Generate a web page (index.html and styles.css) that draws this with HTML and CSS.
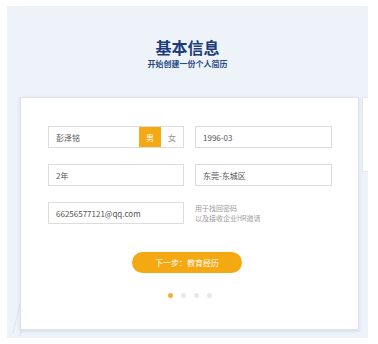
FILE: index.html
```html
<!DOCTYPE html>
<html lang="zh-CN">
<head>
<meta charset="utf-8">
<title>基本信息</title>
<link rel="stylesheet" href="styles.css">
</head>
<body>
<div class="page">
  <div class="panel">
    <svg class="deco" width="30" height="60" viewBox="0 0 30 60"><path d="M11 58 L15 18 M4 55 L12 22" stroke="#dfe4ec" stroke-width="1" fill="none"/></svg>
    <header class="head">
      <h1 class="title">基本信息</h1>
      <p class="subtitle">开始创建一份个人简历</p>
    </header>
    <div class="cards">
      <section class="card">
        <div class="grid">
          <div class="field field-name">
            <span class="val">彭泽铭</span>
            <span class="sex sex-on">男</span>
            <span class="sex">女</span>
          </div>
          <div class="field"><span class="val">1996-03</span></div>
          <div class="field"><span class="val">2年</span></div>
          <div class="field"><span class="val">东莞-东城区</span></div>
          <div class="field"><span class="val">66256577121@qq.com</span></div>
          <div class="hint">用于找回密码<br>以及接收企业HR邀请</div>
        </div>
        <button class="next">下一步：教育经历</button>
        <div class="dots">
          <span class="dot dot-on"></span>
          <span class="dot"></span>
          <span class="dot"></span>
          <span class="dot"></span>
        </div>
      </section>
      <div class="card-next"></div>
    </div>
  </div>
</div>
</body>
</html>
```
FILE: styles.css
```css
* { box-sizing: border-box; }
html, body { margin: 0; padding: 0; background: #ffffff; }
body {
  font-family: "Noto Sans CJK SC", "Noto Sans", sans-serif;
  width: 378px;
  height: 344px;
  overflow: hidden;
}
.page {
  padding: 6px 10px 6px 7px;
}
.panel {
  position: relative;
  height: 332px;
  background: #eef3fa;
  overflow: hidden;
  display: flex;
  flex-direction: column;
}
.deco {
  position: absolute;
  left: 2px;
  bottom: 0;
}
.head {
  height: 91px;
  padding-top: 32px;
  text-align: center;
}
.title {
  margin: 0;
  font-size: 16px;
  line-height: 18px;
  font-weight: 700;
  color: #1c3d7a;
}
.subtitle {
  margin: 3px 0 0;
  font-size: 8px;
  line-height: 10px;
  font-weight: 700;
  color: #2a4a86;
}
.cards {
  display: flex;
  align-items: flex-start;
  gap: 3px;
  padding-left: 13px;
}
.card {
  position: relative;
  flex: 0 0 339px;
  height: 233px;
  background: #ffffff;
  border: 1px solid #dfe3ea;
  box-shadow: 0 1px 3px rgba(120, 135, 160, 0.25);
  padding: 28px 26px 0 27px;
}
.card-next {
  flex: 0 0 20px;
  height: 75px;
  background: #ffffff;
  border: 1px solid #e2e6ed;
}
.grid {
  display: grid;
  grid-template-columns: 136px 137px;
  column-gap: 11px;
  row-gap: 16px;
  grid-auto-rows: 22px;
}
.field {
  display: flex;
  align-items: center;
  border: 1px solid #dcdcdc;
  background: #fff;
  font-size: 8px;
  color: #555;
  padding-left: 7px;
}
.field-name {
  padding-left: 7px;
}
.val {
  flex: 1;
  white-space: nowrap;
}
.sex {
  flex: 0 0 22px;
  height: 20px;
  display: flex;
  align-items: center;
  justify-content: center;
  color: #999;
  font-size: 8px;
}
.sex-on {
  background: #f4a812;
  color: #fff;
}
.hint {
  font-size: 7px;
  line-height: 10px;
  color: #9a9a9a;
  padding-top: 1px;
}
.next {
  display: block;
  margin: 28px auto 0;
  width: 110px;
  height: 21px;
  border: none;
  border-radius: 11px;
  background: #f4a812;
  color: #fff;
  font-family: "Noto Sans CJK SC", "Noto Sans", sans-serif;
  font-size: 8px;
  padding: 0;
  position: relative;
  left: -3px;
}
.dots {
  display: flex;
  justify-content: center;
  gap: 8px;
  margin-top: 20px;
}
.dot {
  width: 5px;
  height: 5px;
  border-radius: 50%;
  background: #e6e8ec;
}
.dot-on {
  background: #f0b43a;
}
```
